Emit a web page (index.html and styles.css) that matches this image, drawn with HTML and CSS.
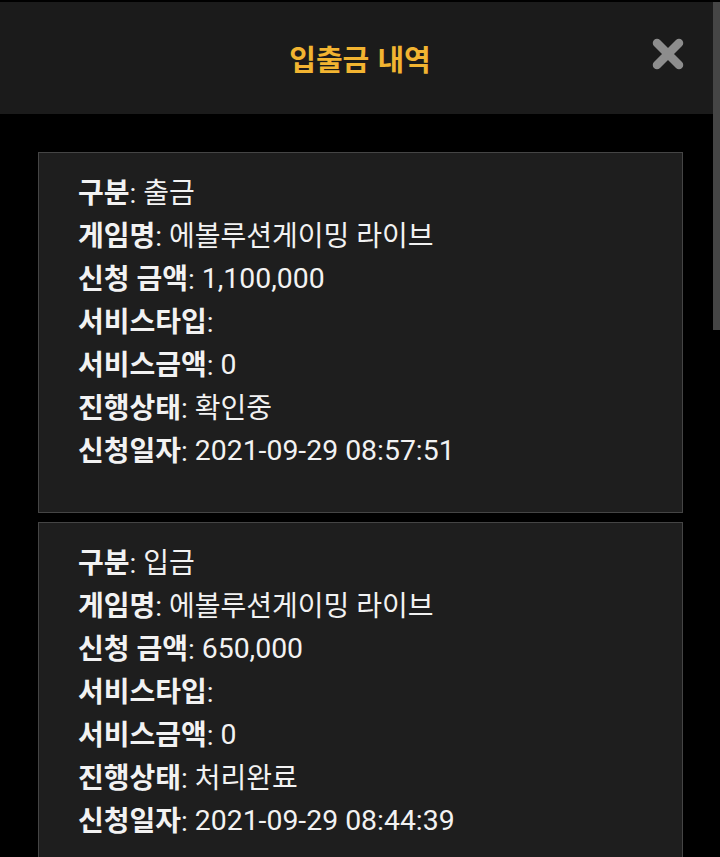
FILE: index.html
```html
<!DOCTYPE html>
<html lang="ko">
<head>
<meta charset="utf-8">
<title>입출금 내역</title>
<link rel="stylesheet" href="styles.css">
</head>
<body>
<div class="page">
  <header class="header">
    <div class="spacer"></div>
    <h1 class="title">입출금 내역</h1>
    <button class="close" aria-label="닫기">
      <svg width="34" height="34" viewBox="0 0 34 34"><path d="M6 6 L28 28 M28 6 L6 28" stroke="#8d8d8d" stroke-width="8.5" stroke-linecap="round" fill="none"/></svg>
    </button>
  </header>
  <main class="list">
    <section class="card">
      <p class="row"><b>구분</b>: 출금</p>
      <p class="row"><b>게임명</b>: 에볼루션게이밍 라이브</p>
      <p class="row"><b>신청 금액</b>: <span class="num">1,100,000</span></p>
      <p class="row"><b>서비스타입</b>:</p>
      <p class="row"><b>서비스금액</b>: <span class="num">0</span></p>
      <p class="row"><b>진행상태</b>: 확인중</p>
      <p class="row"><b>신청일자</b>: <span class="num">2021-09-29 08:57:51</span></p>
    </section>
    <section class="card">
      <p class="row"><b>구분</b>: 입금</p>
      <p class="row"><b>게임명</b>: 에볼루션게이밍 라이브</p>
      <p class="row"><b>신청 금액</b>: <span class="num">650,000</span></p>
      <p class="row"><b>서비스타입</b>:</p>
      <p class="row"><b>서비스금액</b>: <span class="num">0</span></p>
      <p class="row"><b>진행상태</b>: 처리완료</p>
      <p class="row"><b>신청일자</b>: <span class="num">2021-09-29 08:44:39</span></p>
    </section>
  </main>
</div>
<div class="scrollbar"></div>
</body>
</html>
```
FILE: styles.css
```css
html, body {
  margin: 0;
  padding: 0;
  background: #000;
  height: 857px;
  overflow: hidden;
}
body {
  font-family: Roboto, "Noto Sans CJK KR", sans-serif;
  color: #f2f2f2;
}
.page {
  width: 713px;
  padding-top: 2px;
}
.header {
  height: 112px;
  background: #1b1b1b;
  display: grid;
  grid-template-columns: 1fr auto 1fr;
  align-items: center;
  padding-left: 7px;
}
.title {
  margin: 0;
  font-family: "Noto Sans CJK KR", sans-serif;
  font-size: 29px;
  font-weight: 700;
  color: #f2b431;
}
.close {
  justify-self: end;
  margin-right: 28px;
  margin-top: -8px;
  padding: 0;
  border: 0;
  background: none;
  width: 34px;
  height: 34px;
  display: block;
}
.close svg { display: block; }
.list {
  padding: 38px 30px 0 38px;
  display: flex;
  flex-direction: column;
  gap: 9px;
}
.card {
  background: #1e1e1e;
  border: 1px solid #454545;
  padding: 19px 20px 39px 39px;
}
.row {
  margin: 0;
  height: 43px;
  display: flex;
  align-items: center;
  font-size: 28px;
  line-height: 1;
  white-space: pre;
}
.row b {
  font-weight: 700;
}
.num {
  font-size: 28.4px;
}
.scrollbar {
  position: absolute;
  top: 2px;
  right: 0;
  width: 7px;
  height: 328px;
  background: #454545;
}
```
